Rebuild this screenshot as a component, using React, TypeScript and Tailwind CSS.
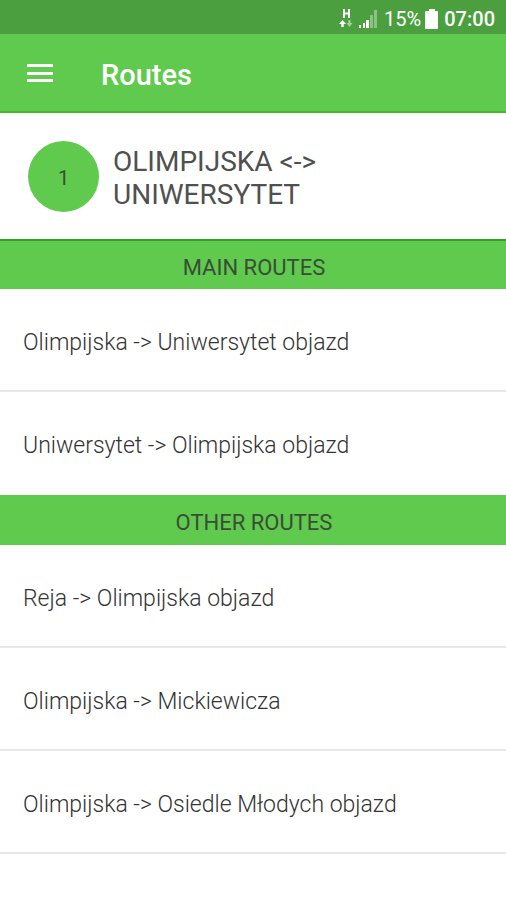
const mainRoutes = ['Olimpijska -> Uniwersytet objazd', 'Uniwersytet -> Olimpijska objazd'];
const otherRoutes = [
  'Reja -> Olimpijska objazd',
  'Olimpijska -> Mickiewicza',
  'Olimpijska -> Osiedle Młodych objazd',
];

function NetworkIcon() {
  return (
    <svg className="h-5 w-4" viewBox="0 0 16 20" fill="none" aria-hidden="true">
      <path d="M6 0v9M11 0v9M6 4.500h5" stroke="#fff" strokeWidth="2" />
      <path d="M4.500 11l3.500 4H5.700v3H3.300v-3H1z" fill="#fff" />
      <path d="M11.500 18l-3-4h2v-3h2v3h2z" fill="#a5d09d" />
    </svg>
  );
}

function SignalIcon() {
  return (
    <svg className="h-5 w-5" viewBox="0 0 20 20" aria-hidden="true">
      <path d="M1 16h2v3H1zM5 14h2v5H5zM8 11h3v8H8z" fill="#fff" />
      <path d="M12 6h3v13h-3zM16 1h3v18h-3z" fill="#8bc381" />
    </svg>
  );
}

function BatteryIcon() {
  return (
    <svg className="h-5 w-4" viewBox="0 0 16 20" aria-hidden="true">
      <path d="M5 0h6v2h2q1 0 1 1v16q0 1-1 1H2q-1 0-1-1V3q0-1 1-1h3z" fill="#fff" />
    </svg>
  );
}

function RouteSection({ title, routes, first }: { title: string; routes: string[]; first?: boolean }) {
  return (
    <section>
      <h2
        className={`flex h-[50px] items-center justify-center bg-[#5fca4d] pt-1.5 pl-0.5 text-[22px] leading-7 font-normal text-[#3b4d38] ${
          first ? 'border-t-2 border-[#31a322]' : ''
        }`}
      >
        {title}
      </h2>
      <ul>
        {routes.map((route) => (
          <li key={route} className={`border-b-2 border-[#e8e8e8] ${first ? 'last:border-white' : ''}`}>
            <a href="#" className="flex h-[101px] items-center px-[23px] pt-1.5 text-[23px] leading-7 font-light text-[#333]">
              {route}
            </a>
          </li>
        ))}
      </ul>
    </section>
  );
}

export default function App() {
  return (
    <div className="min-h-screen bg-white font-[Roboto,sans-serif]">
      <div className="flex h-[34px] items-center justify-end bg-[#4b9f3f] pt-1 pr-[11px] text-white">
        <NetworkIcon />
        <span className="ml-1 flex">
          <SignalIcon />
        </span>
        <span className="ml-1.5 text-[20px] leading-6">15%</span>
        <span className="ml-[3px] flex">
          <BatteryIcon />
        </span>
        <span className="ml-1 text-[20px] leading-6 font-medium">07:00</span>
      </div>
      <header className="flex h-[79px] items-center border-b-2 border-[#43b930] bg-[#5fca4d] px-6 text-white">
        <button type="button" aria-label="Open menu" className="flex">
          <svg className="h-8 w-8" viewBox="0 0 32 32" aria-hidden="true">
            <path d="M3 7h26v3H3zM3 15h26v3H3zM3 22h26v3H3z" fill="#fff" />
          </svg>
        </button>
        <h1 className="ml-[45px] pt-1 text-[29px] leading-8 font-medium">Routes</h1>
      </header>
      <main>
        <div className="flex h-[126px] items-center gap-3.5 px-7">
          <span className="flex size-[71px] shrink-0 items-center justify-center rounded-full bg-[#5fca4d] pt-1 text-[20px] leading-6 text-[#3b4d38]">
            1
          </span>
          <p className="max-w-[260px] pt-1 text-[28px] leading-[33px] text-[#505050]">OLIMPIJSKA &lt;-&gt; UNIWERSYTET</p>
        </div>
        <RouteSection title="MAIN ROUTES" routes={mainRoutes} first />
        <RouteSection title="OTHER ROUTES" routes={otherRoutes} />
      </main>
    </div>
  );
}
